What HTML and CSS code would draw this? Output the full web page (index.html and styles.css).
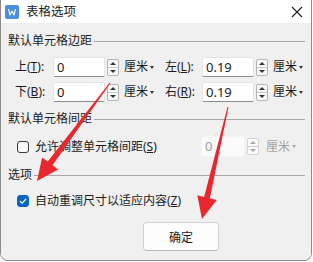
FILE: index.html
```html
<!DOCTYPE html>
<html lang="zh-CN">
<head>
  <meta charset="UTF-8" />
  <title>表格选项</title>
  <link rel="stylesheet" href="styles.css">
</head>
<body>
  <div class="dialog">
    <div class="titlebar">
      <svg class="app-icon" width="14" height="14" viewBox="0 0 14 14">
        <rect width="14" height="14" rx="2" fill="#4b8fe3"/>
        <polyline points="3.5,4 5,10 7,6 9,10 10.5,4" fill="none" stroke="#fff" stroke-width="1.1" stroke-linejoin="round"/>
      </svg>
      <span class="title">表格选项</span>
      <svg class="close" width="12" height="12" viewBox="0 0 12 12">
        <path d="M1 1 L11 11 M11 1 L1 11" stroke="#222" stroke-width="1.2"/>
      </svg>
    </div>
    <div class="content">
      <div class="group-title"><span>默认单元格边距</span></div>
      <div class="field-row first">
        <div class="field">
          <label>上(<u>T</u>):</label>
          <div class="input">0</div>
          <div class="spin"><i class="up"></i><i class="down"></i></div>
          <span class="unit">厘米<b class="caret"></b></span>
        </div>
        <div class="field right">
          <label>左(<u>L</u>):</label>
          <div class="input">0.19</div>
          <div class="spin"><i class="up"></i><i class="down"></i></div>
          <span class="unit">厘米<b class="caret"></b></span>
        </div>
      </div>
      <div class="field-row">
        <div class="field">
          <label>下(<u>B</u>):</label>
          <div class="input">0</div>
          <div class="spin"><i class="up"></i><i class="down"></i></div>
          <span class="unit">厘米<b class="caret"></b></span>
        </div>
        <div class="field right">
          <label>右(<u>R</u>):</label>
          <div class="input">0.19</div>
          <div class="spin"><i class="up"></i><i class="down"></i></div>
          <span class="unit">厘米<b class="caret"></b></span>
        </div>
      </div>

      <div class="group-title second"><span>默认单元格间距</span></div>
      <div class="check-row spacing">
        <span class="checkbox"></span>
        <span class="check-label">允许调整单元格间距(<u>S</u>)</span>
        <div class="field disabled">
          <div class="input">0</div>
          <div class="spin"><i class="up"></i><i class="down"></i></div>
          <span class="unit">厘米<b class="caret"></b></span>
        </div>
      </div>

      <div class="group-title third"><span>选项</span></div>
      <div class="check-row auto">
        <span class="checkbox checked">
          <svg width="12" height="12" viewBox="0 0 12 12">
            <polyline points="3,6.2 5.1,8.2 9,4" fill="none" stroke="#fff" stroke-width="1.3"/>
          </svg>
        </span>
        <span class="check-label">自动重调尺寸以适应内容(<u>Z</u>)</span>
      </div>

      <div class="actions">
        <button class="btn">确定</button>
      </div>
    </div>

    <!-- red annotation arrows drawn on top of the dialog -->
    <svg class="arrows" width="313" height="262" viewBox="0 0 313 262">
      <polygon fill="#e8282e" points="109.6,82.7 47.7,161.6 42.1,157.4 37,181 58.1,169.4 52.5,165.2 110.4,83.3"/>
      <polygon fill="#e8282e" points="227.5,106.9 204.1,196.9 197.3,195.3 202,219 216.7,199.9 209.9,198.3 228.5,107.1"/>
    </svg>
  </div>
</body>
</html>
```

FILE: styles.css
```css
* {
  box-sizing: border-box;
}
body {
  margin: 0;
  background: #fff;
  font-family: "Noto Sans", "Noto Sans CJK SC", sans-serif;
  font-size: 12px;
  color: #1b1b1b;
}
.dialog {
  position: relative;
  width: 312px;
  height: 261px;
  border: 1px solid #8c8c8c;
  border-top: none;
  border-radius: 0 0 8px 8px;
  overflow: hidden;
  display: flex;
  flex-direction: column;
}
.titlebar {
  height: 23px;
  background: #fff;
  display: flex;
  align-items: center;
  padding-left: 4px;
}
.app-icon {
  display: block;
}
.title {
  margin-left: 7px;
  font-size: 12.5px;
  line-height: 16px;
}
.close {
  margin-left: auto;
  margin-right: 8px;
}
.content {
  flex: 1;
  background: #f0f0f0;
  display: flex;
  flex-direction: column;
  padding: 10px 6px 0 7px;
}
.group-title {
  display: flex;
  align-items: center;
  height: 16px;
  line-height: 16px;
}
.group-title::after {
  content: "";
  flex: 1;
  height: 1px;
  background: #a8a8a8;
  margin-left: 2px;
}
.group-title.second {
  margin-top: 9px;
}
.group-title.third {
  margin-top: 10px;
}
.field-row {
  display: flex;
  margin-top: 5px;
  padding-left: 7px;
}
.field-row.first {
  margin-top: 8px;
}
.field {
  display: flex;
  align-items: center;
  height: 20px;
}
.field label {
  width: 38px;
  line-height: 16px;
}
.field.right {
  margin-left: 5px;
}
.field.right label {
  width: 37px;
}
.input {
  width: 52px;
  height: 20px;
  background: #fff;
  border: 1px solid #e4e4e4;
  border-bottom-color: #8a8a8a;
  border-radius: 2px;
  padding-left: 3px;
  font-size: 13px;
  line-height: 18px;
}
.spin {
  width: 12px;
  height: 17px;
  margin-left: 2px;
  border: 1px solid #b4b4b4;
  border-radius: 2px;
  background: #fbfbfb;
  display: flex;
  flex-direction: column;
}
.spin i {
  flex: 1;
  display: flex;
  align-items: center;
  justify-content: center;
}
.spin i.up {
  border-bottom: 1px solid #c8c8c8;
}
.spin i.up::before {
  content: "";
  border-left: 3px solid transparent;
  border-right: 3px solid transparent;
  border-bottom: 3px solid #333;
}
.spin i.down::before {
  content: "";
  border-left: 3px solid transparent;
  border-right: 3px solid transparent;
  border-top: 3px solid #333;
}
.unit {
  display: flex;
  align-items: center;
  margin-left: 5px;
  width: 36px;
  line-height: 16px;
}
.caret {
  margin-left: 2px;
  border-left: 2.5px solid transparent;
  border-right: 2.5px solid transparent;
  border-top: 3px solid #333;
}
.check-row {
  display: flex;
  align-items: center;
  padding-left: 9px;
}
.check-row.spacing {
  margin-top: 9px;
  height: 21px;
}
.check-row.auto {
  margin-top: 8px;
  height: 20px;
}
.checkbox {
  width: 12px;
  height: 12px;
  border: 1px solid #3a3a3a;
  border-radius: 3px;
  background: #fafafa;
  display: flex;
}
.checkbox.checked {
  background: #0a64c2;
  border-color: #0a64c2;
}
.checkbox.checked svg {
  margin: -1px;
}
.check-label {
  margin-left: 6px;
  line-height: 16px;
}
.field.disabled {
  margin-left: auto;
  margin-right: 9px;
  height: 21px;
  color: #a3a3a3;
}
.field.disabled .input {
  width: 44px;
  height: 21px;
  border-color: #f5f5f5;
  background: #fafafa;
  color: #a0a0a0;
  padding-left: 3px;
}
.field.disabled .spin {
  margin-left: 2px;
  border-color: #d4d4d4;
}
.field.disabled .spin i.up::before {
  border-bottom-color: #a8a8a8;
}
.field.disabled .spin i.down::before {
  border-top-color: #a8a8a8;
}
.field.disabled .unit {
  margin-left: 7px;
  width: 30px;
}
.field.disabled .caret {
  border-top-color: #a8a8a8;
}
.actions {
  display: flex;
  padding-left: 135px;
  margin-top: 11px;
}
.btn {
  width: 76px;
  height: 29px;
  background: #fdfdfd;
  border: 1px solid #d2d2d2;
  border-bottom-color: #b8b8b8;
  border-radius: 4px;
  font-family: "Noto Sans CJK SC", sans-serif;
  font-size: 12px;
  color: #1b1b1b;
}
.arrows {
  position: absolute;
  left: -1px;
  top: 0;
  pointer-events: none;
}
```
